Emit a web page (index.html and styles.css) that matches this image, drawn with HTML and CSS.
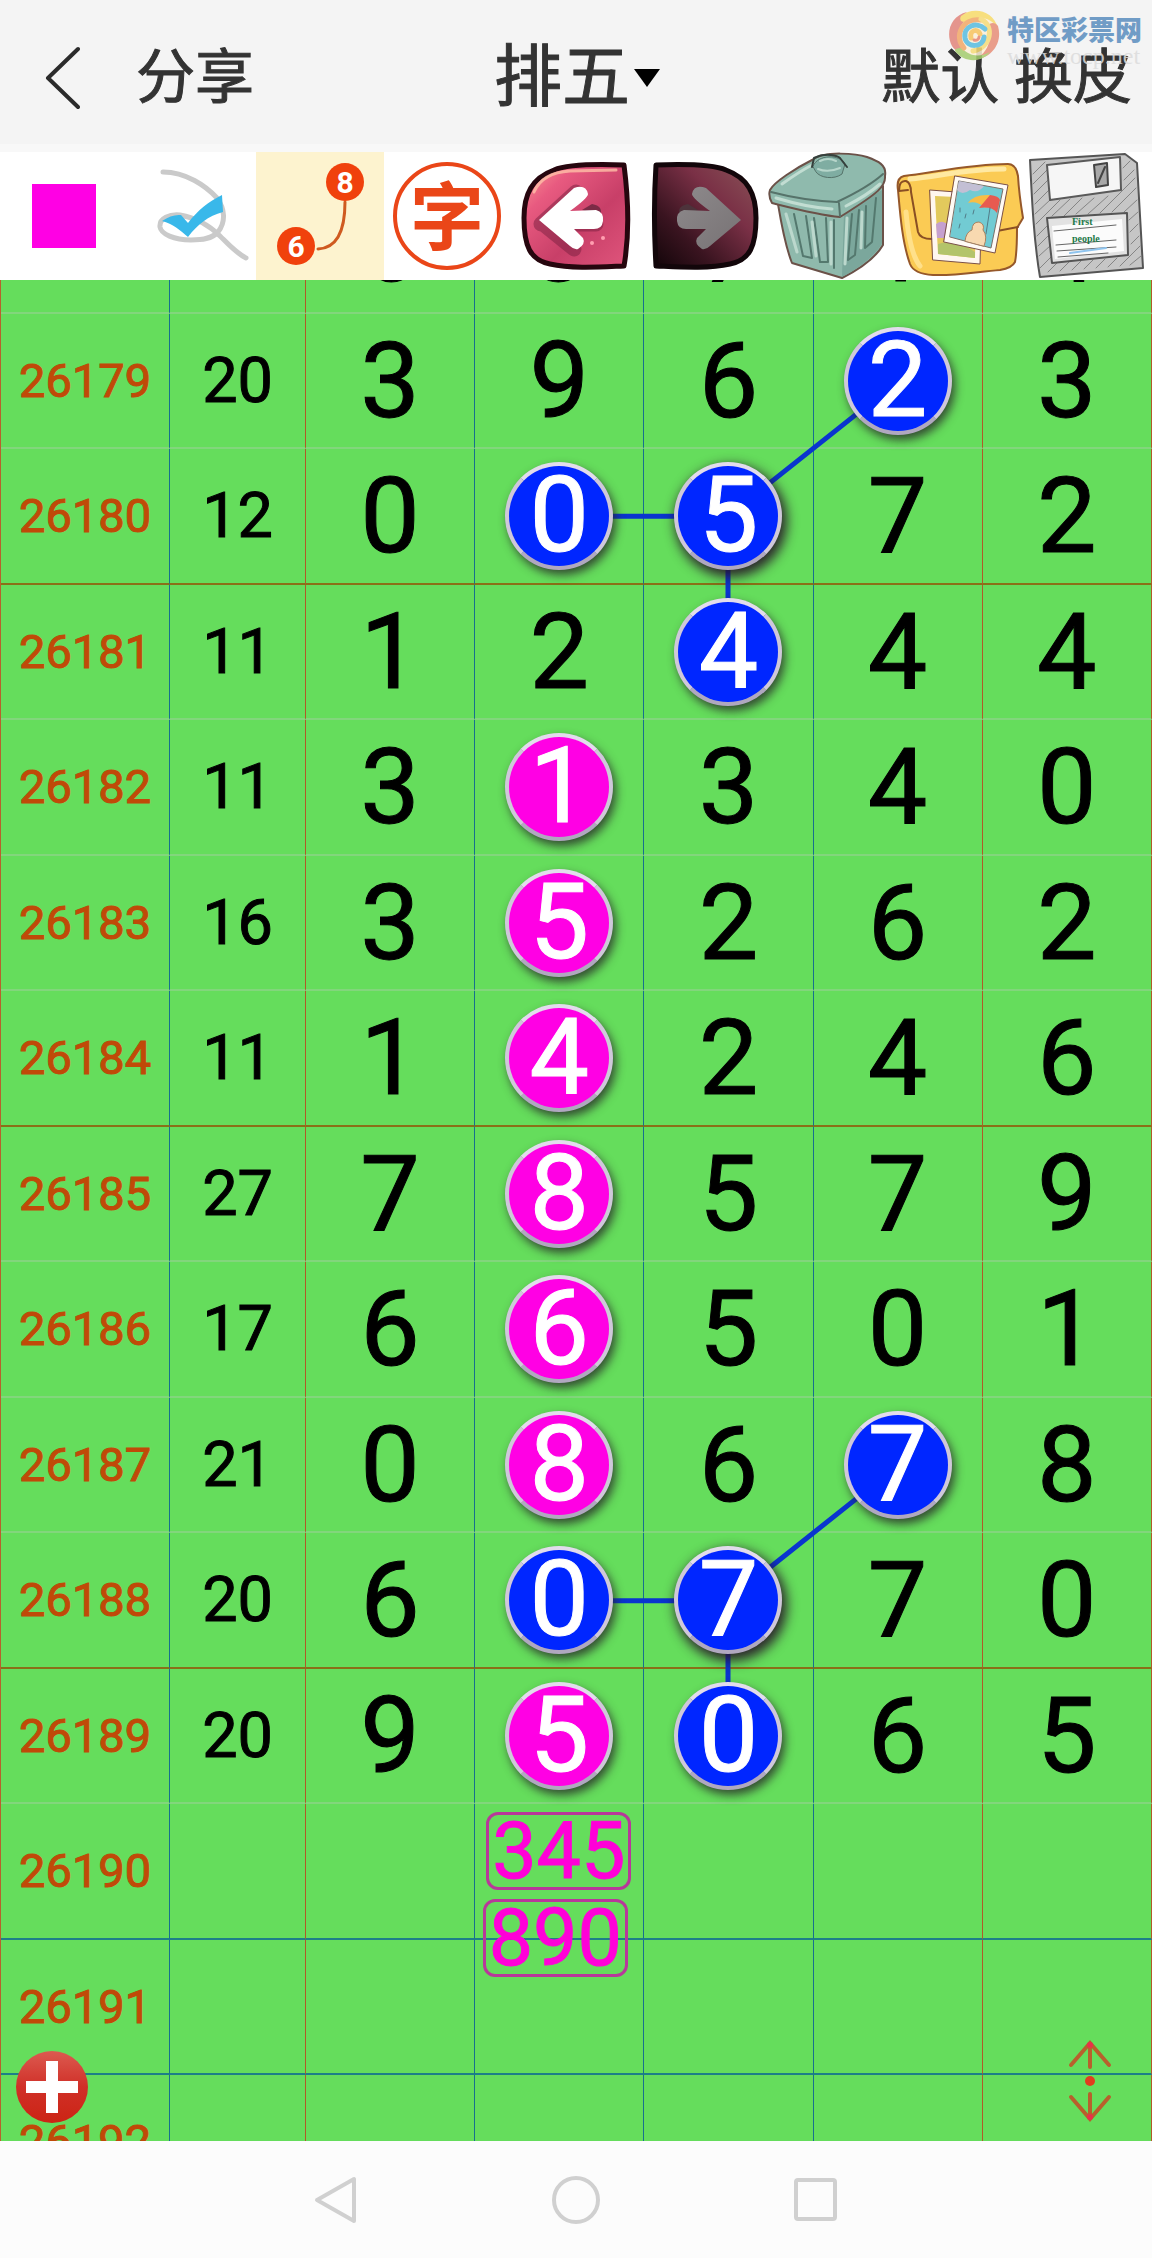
FILE: index.html
```html
<!DOCTYPE html>
<html lang="zh-CN">
<head>
    <meta charset="UTF-8">
    <meta name="viewport" content="width=device-width, initial-scale=1.0">
    <title>排五</title>
    <link rel="stylesheet" href="styles.css">
</head>
<body>
    <header class="topbar">
        <div class="topbar-left">
            <button class="back" aria-label="返回">
                <svg width="36" height="64" viewBox="0 0 36 64" fill="none" stroke="#2b2b2b" stroke-width="4" stroke-linecap="round" stroke-linejoin="round"><path d="M34 3 L4 32 L34 61"/></svg>
            </button>
            <button class="link">分享</button>
        </div>
        <button class="title" aria-haspopup="true">排五<span class="caret"></span></button>
        <div class="topbar-right">
            <button class="link">默认 换皮</button>
        </div>
        <a class="logo" href="#">
            <svg width="54" height="54" viewBox="0 0 54 54" fill="none" stroke-linecap="round">
                <circle cx="27" cy="27" r="24" fill="#fdf0d8"/>
                <path d="M20 4 C4 8 -2 24 5 38 C8 43 14 46 20 46 C8 36 8 18 22 10 C18 10 16 8 20 4Z" fill="#e2857c"/>
                <path d="M14 8 C26 -2 46 2 51 20 C44 10 32 6 18 14 C14 14 12 12 14 8Z" fill="#f8dc6a"/>
                <path d="M51 18 C56 36 44 50 28 52 C40 44 46 34 40 18 C44 14 48 14 51 18Z" fill="#e88e78"/>
                <path d="M8 43 C18 56 36 54 43 44 C32 50 22 48 15 40 C12 40 8 40 8 43Z" fill="#a5cd6e"/>
                <path d="M17 40 C6 28 16 9 34 12" stroke="#f2a868" stroke-width="5"/>
                <path d="M34 11 C48 18 44 40 26 43" stroke="#f7dc78" stroke-width="5"/>
                <path d="M38 21 C30 13 16 18 18 30 C20 40 36 40 37 29" stroke="#58bce0" stroke-width="5"/>
                <path d="M24 30 C22 22 31 20 33 26" stroke="#f8c460" stroke-width="5"/>
                <path d="M27 32 C30 33 32 31 32 29" stroke="#e98672" stroke-width="3"/>
            </svg>
            <span class="logo-text">
                <span class="logo-name">特区彩票网</span>
                <span class="logo-url">www.tocp.net</span>
            </span>
        </a>
    </header>

    <div class="toolbar">
        <button class="tool" aria-label="颜色"><span class="swatch"></span></button>
        <button class="tool" aria-label="画线">
            <svg viewBox="0 0 128 128" fill="none">
                <path d="M35 20 C58 20 78 34 89 46 C97 57 98 70 90 80 C84 87 74 88 63 88 C46 88 33 82 32 75 C31 66 42 62 52 63 C68 66 82 74 92 84 C101 93 108 101 118 106" stroke="#cacaca" stroke-width="5" stroke-linecap="round"/>
                <path d="M34 69 Q44 62 53 63 L60 71 C70 58 80 50 94 43 L95 60 C80 64 70 72 60 85 C52 78 45 72 34 69Z" fill="#39b8ea"/>
            </svg>
        </button>
        <button class="tool active" aria-label="连线">
            <svg viewBox="0 0 128 128">
                <path d="M89 50 C89 76 83 96 62 97" fill="none" stroke="#cf5a20" stroke-width="3" stroke-linecap="round"/>
                <circle cx="89" cy="30" r="19" fill="#f0410c"/>
                <circle cx="40" cy="94" r="19" fill="#f0410c"/>
                <text class="dot-num" x="89" y="41">8</text>
                <text class="dot-num" x="40" y="105">6</text>
            </svg>
        </button>
        <button class="tool" aria-label="文字">
            <svg viewBox="0 0 128 128">
                <circle cx="63" cy="64" r="52" fill="none" stroke="#ea4618" stroke-width="4"/>
                <text class="zi" x="63" y="92">字</text>
            </svg>
        </button>
        <button class="tool" aria-label="撤销">
            <svg viewBox="0 0 128 128">
                <defs>
                    <linearGradient id="pink" x1="0" y1="0" x2="1" y2="1">
                        <stop offset="0" stop-color="#fb9a95"/>
                        <stop offset=".25" stop-color="#e85a80"/>
                        <stop offset=".6" stop-color="#c83f68"/>
                        <stop offset="1" stop-color="#e0557c"/>
                    </linearGradient>
                </defs>
                <path d="M112 13 C84 12 56 12 42 18 C20 26 12 42 12 66 C12 94 18 108 38 112 C60 117 88 115 112 114 C118 80 116 44 112 13Z" fill="url(#pink)" stroke="#26060e" stroke-width="5" stroke-linejoin="round"/>
                <path d="M22 40 C28 26 40 20 58 19 L104 18" fill="none" stroke="#ffc0a8" stroke-width="3" stroke-linecap="round" opacity=".8"/>
                <path d="M70 58 L80 52 Q92 54 88 64Z" fill="#7c2b46"/>
                <path d="M29 72 L64 40 M31 72 L62 97 M40 72 L84 72" stroke="#7a2040" stroke-width="15" stroke-linecap="round" opacity=".5"/>
                <path d="M27 68 L62 36 Q74 32 76 42 Q76 46 58 59 L84 58 Q92 60 91 69 Q90 78 80 77 L62 77 L71 86 Q74 92 66 97 Q62 98 58 94Z" fill="#fff"/>
                <circle cx="91" cy="86" r="2" fill="#ff9fb0"/><circle cx="80" cy="91" r="2" fill="#ff9fb0"/>
            </svg>
        </button>
        <button class="tool" aria-label="重做">
            <svg viewBox="0 0 128 128">
                <defs>
                    <linearGradient id="dark" x1="1" y1="0" x2="0" y2="1">
                        <stop offset="0" stop-color="#8a5558"/>
                        <stop offset=".35" stop-color="#7a3046"/>
                        <stop offset=".7" stop-color="#3a1420"/>
                        <stop offset="1" stop-color="#120509"/>
                    </linearGradient>
                    <linearGradient id="grey" x1="0" y1="0" x2="1" y2="1">
                        <stop offset="0" stop-color="#8e8a8c"/>
                        <stop offset="1" stop-color="#777274"/>
                    </linearGradient>
                </defs>
                <path d="M16 13 C44 12 72 12 86 18 C108 26 116 42 116 66 C116 94 110 108 90 112 C68 117 40 115 16 114 C14 80 14 44 16 13Z" fill="url(#dark)" stroke="#12060a" stroke-width="5" stroke-linejoin="round"/>
                <path d="M58 58 L48 52 Q36 54 40 64Z" fill="#4d333b"/>
                <path d="M101 68 L66 36 Q54 32 52 42 Q52 46 70 59 L44 58 Q36 60 37 69 Q38 78 48 77 L66 77 L57 86 Q54 92 62 97 Q66 98 70 94Z" fill="url(#grey)"/>
            </svg>
        </button>
        <button class="tool" aria-label="清空">
            <svg viewBox="0 0 128 128" stroke-linejoin="round" stroke-linecap="round">
                <path d="M10 52 C14 76 18 96 24 111 L74 126 C92 117 108 105 115 93 L115 34Z" fill="#8fb9ac" stroke="#6b5148" stroke-width="2"/>
                <path d="M76 62 L74 125 C92 116 106 104 114 92 L114 38Z" fill="#7ba79c"/>
                <path d="M26 62 L35 104 L44 106 L38 64 M46 66 L52 110 L60 110 L58 66 M66 68 L66 116 M84 62 L80 108 L87 103 L91 58 M98 54 L97 96 L104 90 L108 46" fill="none" stroke="#54786e" stroke-width="2"/>
                <path d="M18 62 L29 100 M44 70 L48 104 M63 70 L63 112 M79 66 L77 112 M94 60 L93 96" fill="none" stroke="#bcd8cd" stroke-width="3"/>
                <path d="M2 38 C6 30 28 16 44 8 C56 -2 90 2 99 5 C110 9 119 13 117 24 C118 34 112 40 72 65 C50 63 24 56 4 51 Q0 44 2 38Z" fill="#8fbaad" stroke="#6b5148" stroke-width="2"/>
                <path d="M3 40 C22 45 46 49 69 50 C86 42 104 32 115 22 M71 51 L72 64" fill="none" stroke="#56736a" stroke-width="2"/>
                <path d="M14 32 C28 22 38 16 46 12 M8 46 C28 52 46 56 64 57 M78 54 C92 47 104 39 112 32" fill="none" stroke="#c2ddd2" stroke-width="3"/>
                <path d="M45 14 C50 2 72 2 77 12 L74 22 C66 28 52 26 48 20Z" fill="#7fada2" stroke="#56736a" stroke-width="1"/>
                <path d="M44 15 L46 6 C58 0 70 4 72 6 L79 15" fill="none" stroke="#35403c" stroke-width="2"/>
                <path d="M52 9 Q60 5 68 9 M50 17 Q60 21 72 16" fill="none" stroke="#b7d6cb" stroke-width="2"/>
            </svg>
        </button>
        <button class="tool" aria-label="相册">
            <svg viewBox="0 0 128 128" stroke-linejoin="round" stroke-linecap="round">
                <path d="M2 38 Q0 26 8 24 C40 20 76 12 112 12 Q120 12 122 24 C123 42 125 54 127 66 L121 76 C121 90 121 100 119 110 Q116 116 104 118 C80 120 58 124 37 123 Q18 122 14 112 C6 90 4 60 2 38Z" fill="#fbcb54" stroke="#96582a" stroke-width="2"/>
                <path d="M14 27 C44 24 72 17 108 17" fill="none" stroke="#ffe9a2" stroke-width="5"/>
                <path d="M10 60 C12 84 16 104 24 114" fill="none" stroke="#ffe08a" stroke-width="5"/>
                <path d="M3 39 Q3 28 10 29 Q15 31 15 40 L22 80 Q24 87 36 87 M3 39 L12 38 M101 79 L122 75" fill="none" stroke="#8a4f24" stroke-width="2"/>
                <path d="M34 38 L86 42 L84 112 L37 108Z" fill="#fff7ef" stroke="#7a5048" stroke-width="1"/>
                <path d="M39 44 L80 46 L79 106 L42 102Z" fill="#e2c95c"/>
                <path d="M40 72 Q48 66 54 76 L54 86 L41 86Z" fill="#c5a0cf"/>
                <path d="M42 92 Q58 86 79 100 L79 106 L42 102Z" fill="#b3c46a"/>
                <path d="M59 24 L112 33 L99 101 L48 90Z" fill="#fffaf5" stroke="#7a5048" stroke-width="1"/>
                <path d="M63 29 L107 37 L95 96 L54 85Z" fill="#72cbd3" stroke="#7a7068" stroke-width="1"/>
                <path d="M63 29 L88 34 Q82 42 74 38 Q66 44 61 38Z" fill="#c3bfd4"/>
                <path d="M72 51 Q78 42 94 43 L90 56 Q80 48 72 51Z" fill="#f8bd45"/>
                <path d="M94 43 Q103 44 104 48 L101 61 Q96 54 83 56Z" fill="#e75a50"/>
                <path d="M94 56 L90 82 M64 56 L64 60 M70 62 L69 66 M78 58 L77 62 M64 72 L63 76" fill="none" stroke="#527c88" stroke-width="1"/>
                <path d="M69 89 Q70 80 76 78 Q76 70 83 70 Q89 72 87 78 Q92 84 88 94Z" fill="#f8d9b0" stroke="#a98260" stroke-width="1"/>
            </svg>
        </button>
        <button class="tool" aria-label="保存">
            <svg viewBox="0 0 128 128" stroke-linejoin="round" stroke-linecap="round">
                <path d="M6 8 L101 2 L113 11 C115 46 117 82 119 116 L16 125 C10 90 8 50 6 8Z" fill="#c6c6c6" stroke="#555" stroke-width="2"/>
                <path d="M9 22 L21 10 M9 32 L23 18 M10 42 L24 28 M11 52 L25 38 M11 62 L26 48 M12 72 L36 48 M13 84 L23 74 M14 94 L24 84 M15 104 L26 94 M16 116 L28 104 M24 120 L34 110 M36 119 L45 110 M48 118 L57 109 M60 117 L69 108 M72 116 L81 107 M84 115 L93 106 M96 114 L116 94 M106 113 L117 104 M107 92 L115 84 M106 80 L114 72 M105 68 L114 60 M100 60 L113 48 M88 60 L112 36 M76 61 L111 26 M64 62 L84 44 M52 62 L70 46 M40 64 L58 46 M28 64 L46 47 M100 28 L110 18 M99 16 L106 9" fill="none" stroke="#858585" stroke-width="1"/>
                <path d="M23 13 L96 5 L97 38 L26 48Z" fill="#f6f6f6" stroke="#5a5a5a" stroke-width="2"/>
                <path d="M70 13 L83 11 L84 33 L72 35Z" fill="#a8a8a8" stroke="#444" stroke-width="2"/>
                <path d="M74 31 L81 15" fill="none" stroke="#444" stroke-width="2"/>
                <path d="M23 66 L103 61 L104 103 L28 111Z" fill="#e2e2e2" stroke="#555" stroke-width="2"/>
                <path d="M28 74 L98 67 L100 99 L31 107Z" fill="#fbfbfb"/>
                <path d="M30 79 L92 73 M32 93 L92 88 M33 99 L92 95 M34 105 L84 101" fill="none" stroke="#666" stroke-width="1"/>
                <path d="M46 101 L82 96" fill="none" stroke="#8fc4ee" stroke-width="2"/>
                <text class="disk-text" x="48" y="73">First</text>
                <text class="disk-text" x="48" y="90">people</text>
            </svg>
        </button>
    </div>

    <main class="chart">
        <div class="sheet">
            <table class="trend">
                <colgroup>
                    <col class="c-issue"><col class="c-sum"><col class="c-num"><col class="c-num"><col class="c-num"><col class="c-num"><col class="c-num">
                </colgroup>
                <tbody>
                    <tr><th>26178</th><td>21</td><td>6</td><td>3</td><td>7</td><td>1</td><td>4</td></tr>
                    <tr><th>26179</th><td>20</td><td>3</td><td>9</td><td>6</td><td><span class="ball blue">2</span></td><td>3</td></tr>
                    <tr class="line-red"><th>26180</th><td>12</td><td>0</td><td><span class="ball blue">0</span></td><td><span class="ball blue deep">5</span></td><td>7</td><td>2</td></tr>
                    <tr><th>26181</th><td>11</td><td>1</td><td>2</td><td><span class="ball blue">4</span></td><td>4</td><td>4</td></tr>
                    <tr><th>26182</th><td>11</td><td>3</td><td><span class="ball pink">1</span></td><td>3</td><td>4</td><td>0</td></tr>
                    <tr><th>26183</th><td>16</td><td>3</td><td><span class="ball pink">5</span></td><td>2</td><td>6</td><td>2</td></tr>
                    <tr class="line-red"><th>26184</th><td>11</td><td>1</td><td><span class="ball pink">4</span></td><td>2</td><td>4</td><td>6</td></tr>
                    <tr><th>26185</th><td>27</td><td>7</td><td><span class="ball pink">8</span></td><td>5</td><td>7</td><td>9</td></tr>
                    <tr><th>26186</th><td>17</td><td>6</td><td><span class="ball pink">6</span></td><td>5</td><td>0</td><td>1</td></tr>
                    <tr><th>26187</th><td>21</td><td>0</td><td><span class="ball pink">8</span></td><td>6</td><td><span class="ball blue">7</span></td><td>8</td></tr>
                    <tr class="line-red"><th>26188</th><td>20</td><td>6</td><td><span class="ball blue">0</span></td><td><span class="ball blue deep">7</span></td><td>7</td><td>0</td></tr>
                    <tr><th>26189</th><td>20</td><td>9</td><td><span class="ball pink">5</span></td><td><span class="ball blue">0</span></td><td>6</td><td>5</td></tr>
                    <tr class="line-blue"><th>26190</th><td></td><td></td><td></td><td></td><td></td><td></td></tr>
                    <tr class="line-blue"><th>26191</th><td></td><td></td><td></td><td></td><td></td><td></td></tr>
                    <tr><th>26192</th><td></td><td></td><td></td><td></td><td></td><td></td></tr>
                </tbody>
            </table>

            <!-- lines between the marked numbers -->
            <svg class="links" viewBox="0 0 1152 2032" preserveAspectRatio="none" fill="none" stroke="#0a35cf" stroke-width="5">
                <path d="M559 338 H728 L898 203 M728 338 V474"/>
                <path d="M559 1422 H728 L898 1287 M728 1422 V1558"/>
            </svg>

            <span class="note note-1">345</span>
            <span class="note note-2">890</span>
        </div>

        <button class="add" aria-label="添加">
            <svg width="72" height="72" viewBox="0 0 72 72">
                <defs>
                    <linearGradient id="red" x1="0" y1="0" x2="0" y2="1">
                        <stop offset="0" stop-color="#dc5a50"/>
                        <stop offset=".5" stop-color="#d03028"/>
                        <stop offset="1" stop-color="#cc2414"/>
                    </linearGradient>
                </defs>
                <circle cx="36" cy="36" r="36" fill="url(#red)"/>
                <path d="M36 10 V62 M10 36 H62" stroke="#fff" stroke-width="12"/>
            </svg>
        </button>
        <button class="scroll" aria-label="滚动">
            <svg width="44" height="84" viewBox="0 0 44 84" fill="none" stroke="#b8602c" stroke-width="4" stroke-linecap="round">
                <path d="M3 26 L22 4 L41 26 M22 5 V28 M3 58 L22 80 L41 58 M22 55 V79"/>
                <circle cx="22" cy="42" r="5" fill="#e23c1e" stroke="none"/>
                <circle cx="22" cy="6" r="3" fill="#e8304a" stroke="none"/>
                <circle cx="22" cy="78" r="3" fill="#e8304a" stroke="none"/>
            </svg>
        </button>
    </main>

    <nav class="navbar">
        <button aria-label="返回"><svg width="48" height="48" viewBox="0 0 48 48"><path d="M42 3 V45 L5 24Z"/></svg></button>
        <button aria-label="主页"><svg width="48" height="48" viewBox="0 0 48 48"><circle cx="24" cy="24" r="22"/></svg></button>
        <button aria-label="最近"><svg width="48" height="48" viewBox="0 0 48 48"><rect x="4" y="4" width="39" height="39" rx="2"/></svg></button>
    </nav>
</body>
</html>
```
FILE: styles.css
```css
* {
    box-sizing: border-box;
}
body {
    margin: 0;
    height: 100vh;
    display: flex;
    flex-direction: column;
    background: #fcfcfc;
    font-family: Roboto, "Noto Sans CJK SC", sans-serif;
    color: #333;
}
button {
    margin: 0;
    padding: 0;
    border: 0;
    background: none;
    font: inherit;
    color: inherit;
}
svg {
    display: block;
}

/* top bar */
.topbar {
    position: relative;
    flex: none;
    height: 152px;
    display: grid;
    grid-template-columns: 1fr auto 1fr;
    align-items: center;
    padding: 4px 20px 0 44px;
    background: linear-gradient(#f4f4f4 144px, #f8f8f8 144px);
}
.topbar-left {
    display: flex;
    align-items: center;
    gap: 56px;
}
.topbar-right {
    text-align: right;
}
.link {
    font-size: 59px;
    line-height: 80px;
    white-space: nowrap;
    -webkit-text-stroke: 1px;
}
.title {
    display: flex;
    align-items: center;
    gap: 4px;
    margin-right: 22px;
    font-size: 68px;
    line-height: 80px;
    -webkit-text-stroke: 1px;
}
.caret {
    border: 13px solid transparent;
    border-top: 18px solid #000;
    border-bottom: 0;
}
.logo {
    position: absolute;
    top: 8px;
    right: 10px;
    display: flex;
    gap: 6px;
    text-decoration: none;
    opacity: .85;
}
.logo-text {
    display: flex;
    flex-direction: column;
    padding-top: 8px;
}
.logo-name {
    font-size: 27px;
    font-weight: 900;
    line-height: 30px;
    color: #5a8dbf;
}
.logo-url {
    font-family: "Liberation Serif", serif;
    font-size: 24px;
    line-height: 20px;
    color: #dcdcdc;
}

/* drawing tools */
.toolbar {
    flex: none;
    display: grid;
    grid-template-columns: repeat(9, 1fr);
    height: 128px;
    background: #fff;
}
.tool {
    display: flex;
    align-items: center;
    justify-content: center;
}
.tool svg {
    width: 128px;
    height: 128px;
}
.tool.active {
    background: #fdf3cf;
}
.swatch {
    width: 64px;
    height: 64px;
    background: #ff00e4;
}
.dot-num {
    font-size: 30px;
    font-weight: 700;
    fill: #fff;
    text-anchor: middle;
}
.zi {
    font-family: "Noto Sans CJK SC", sans-serif;
    font-size: 74px;
    font-weight: 700;
    fill: #ea4618;
    text-anchor: middle;
}
.disk-text {
    font-family: "Liberation Serif", serif;
    font-size: 10px;
    font-weight: 700;
    fill: #1d7a4a;
}

/* trend chart, scrolled part of a row down */
.chart {
    position: relative;
    flex: 1 1 0;
    min-height: 0;
    overflow: hidden;
    background: #65dd5c;
}
.sheet {
    position: relative;
    margin-top: -102px;
    -webkit-text-stroke: 1px;
}
.trend {
    width: 100%;
    table-layout: fixed;
    border-collapse: separate;
    border-spacing: 0;
    border-left: 1px solid #b8602c;
}
.c-issue, .c-num {
    width: 14.7%;
}
.c-sum {
    width: 11.8%;
}
.trend tr {
    height: 135px;
}
.trend tr:nth-child(odd) {
    height: 136px;
}
.trend th, .trend td {
    padding: 0;
    border-right: 1px solid #17708e;
    border-bottom: 2px solid #82d67c;
    text-align: center;
    vertical-align: middle;
    font-size: 106px;
    font-weight: 400;
    line-height: 124px;
    color: #000;
}
.trend th {
    font-size: 47px;
    color: #c04a08;
}
.trend td:nth-child(2) {
    font-size: 63px;
    border-right-color: #b05a28;
}
.trend td:nth-child(6), .trend td:nth-child(7) {
    border-right-color: #b05a28;
}
.trend .line-red > * {
    border-bottom-color: #8a7018;
}
.trend .line-blue > * {
    border-bottom-color: #1d8088;
}
.ball {
    position: relative;
    z-index: 1;
    display: block;
    width: 108px;
    height: 108px;
    margin: 0 auto;
    border: 4px solid;
    border-color: #e2dcec #cfc8da #b0a8c0;
    border-radius: 50%;
    line-height: 98px;
    color: #fff;
    box-shadow: 3px 5px 10px rgba(40, 40, 40, .8);
}
.ball.deep {
    box-shadow: 3px 5px 12px 2px rgba(40, 20, 40, .9);
}
.blue {
    background: #0026ff;
}
.pink {
    background: #ff00e4;
}
.links {
    position: absolute;
    top: 0;
    left: 0;
    width: 100%;
    height: 100%;
}
.note {
    position: absolute;
    padding: 0 3px;
    border: 3px solid #b8389a;
    border-radius: 12px;
    font-size: 79px;
    line-height: 72px;
    color: #ff00d8;
}
.note-1 {
    top: 1634px;
    left: 42.2%;
}
.note-2 {
    top: 1721px;
    left: 41.9%;
}
.add {
    position: absolute;
    left: 16px;
    bottom: 18px;
}
.scroll {
    position: absolute;
    right: 40px;
    bottom: 18px;
}

/* system keys */
.navbar {
    flex: none;
    display: flex;
    justify-content: center;
    align-items: center;
    gap: 192px;
    height: 117px;
}
.navbar svg {
    fill: none;
    stroke: #d0d0d0;
    stroke-width: 4;
    stroke-linejoin: round;
}
```
